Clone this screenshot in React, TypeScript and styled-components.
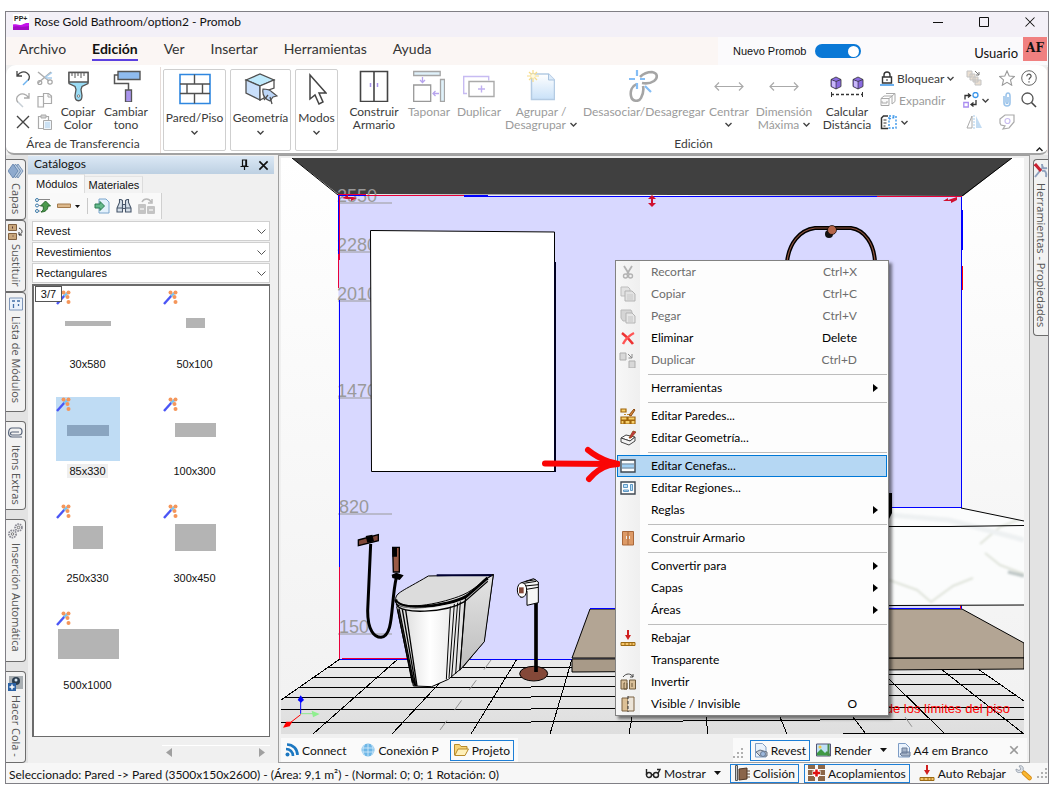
import React from 'react';
import styled, { createGlobalStyle, css } from 'styled-components';

const ui = 'Lato, "Open Sans", sans-serif';
const classic = '"Liberation Sans", Arial, sans-serif';
const ink = '#3b3b3b';
const faded = '#9b9b9b';

const GlobalStyle = createGlobalStyle`
  *, *::before, *::after { box-sizing: border-box; }
  body { margin: 0; background: #fff; font-family: ${ui}; font-size: 12px; color: #111; }
  button, input, select { font: inherit; color: inherit; }
  button { border: 0; padding: 0; margin: 0; background: none; }
  svg { display: block; flex: none; }
`;

/* ---------- window frame ---------- */
const Page = styled.div`
  display: flex;
  min-height: 100vh;
  padding: 11px 5px 6px;
`;
const Window = styled.div`
  flex: 1;
  min-width: 0;
  display: flex;
  flex-direction: column;
  border: 1px solid #807f85;
  background: #f0f0f0;
`;
const TitleBar = styled.header`
  display: flex;
  align-items: center;
  height: 25px;
  padding: 0 12px 6px 7px;
  gap: 5px;
  background: #f3f0f7;
`;
const Title = styled.h1`
  flex: 1;
  margin: 0;
  font-size: 12px;
  font-weight: 400;
  line-height: 16px;
`;
const WindowButtons = styled.div`
  display: flex;
  gap: 34px;
`;

/* ---------- ribbon tabs ---------- */
const TabBar = styled.nav`
  display: flex;
  align-items: stretch;
  height: 28px;
  background: #fbfafc;
`;
const RibbonTabs = styled.div`
  display: flex;
  flex: 0 0 712px;
  gap: 26px;
  padding: 2px 13px 0;
  background: #fbf6f4;
`;
const RibbonTab = styled.button<{ $active?: boolean }>`
  height: 22px;
  font-size: 14px;
  line-height: 20px;
  color: ${(p) => (p.$active ? '#111' : '#333')};
  font-weight: ${(p) => (p.$active ? 700 : 400)};
  border-bottom: 2px solid ${(p) => (p.$active ? '#5b3fe0' : 'transparent')};
`;
const ModeSwitch = styled.label`
  display: flex;
  align-items: center;
  gap: 9px;
  padding-left: 15px;
  margin-right: auto;
  font-family: ${classic};
  font-size: 11px;
`;
const Toggle = styled.input`
  appearance: none;
  width: 46px;
  height: 14px;
  margin: 0;
  border-radius: 7px;
  background: #0a78d6;
  display: flex;
  justify-content: flex-end;
  align-items: center;
  padding-right: 2px;
  &::after { content: ''; width: 11px; height: 11px; border-radius: 50%; background: #fff; }
`;
const User = styled.div`
  padding: 7px 5px 0 0;
  font-size: 13px;
  line-height: 18px;
`;
const Avatar = styled.div`
  width: 24px;
  height: 24px;
  margin-right: 1px;
  background: #f08080;
  font: 700 12px/22px "DejaVu Serif", serif;
  text-align: center;
`;

/* ---------- ribbon ---------- */
const RibbonArea = styled.section`
  display: flex;
  height: 90px;
  border-bottom: 2px solid #a3a3a3;
  border-radius: 10px 10px 8px 8px;
  background: #fff;
  position: relative;
  line-height: 13px;
`;
const Group = styled.div<{ $grow?: boolean; $width?: number }>`
  display: flex;
  flex-direction: column;
  align-items: center;
  ${(p) => (p.$grow ? 'flex: 1;' : `flex: 0 0 ${p.$width}px;`)}
  border-right: 1px solid #e6dcd8;
  margin: 2px 0 0;
`;
const GroupLabel = styled.div`
  color: ${ink};
  line-height: 14px;
`;
const ClipboardTools = styled.div`
  display: grid;
  grid-template-columns: 44px 44px 52px;
  width: 100%;
  padding-left: 6px;
  height: 70px;
`;
const EditTools = styled.div`
  display: grid;
  grid-template-columns: 56px 54px 46px 78px 128px 42px 68px 58px 87px 33px 22px 22px;
  width: 100%;
  padding-left: 6px;
  height: 70px;
`;
const MiniGrid = styled.div<{ $cols?: number }>`
  display: grid;
  grid-template-columns: repeat(${(p) => p.$cols || 1}, 1fr);
  grid-auto-rows: 22px;
  justify-items: ${(p) => (p.$cols ? 'center' : 'start')};
`;
const CommandList = styled(MiniGrid)`
  padding-left: 4px;
`;
const MiniButton = styled.button<{ $off?: boolean }>`
  display: flex;
  align-items: center;
  gap: 3px;
  min-width: 22px;
  justify-content: center;
  color: ${(p) => (p.$off ? faded : ink)};
`;
const BigButton = styled.button<{ $off?: boolean }>`
  display: flex;
  flex-direction: column;
  align-items: center;
  gap: 3px;
  padding-top: 3px;
  line-height: 13px;
  white-space: nowrap;
  color: ${(p) => (p.$off ? faded : ink)};
`;
const Label = styled.span`
  display: flex;
  flex-direction: column;
  align-items: center;
`;
const WithCaret = styled.span`
  display: flex;
  align-items: center;
  gap: 4px;
  min-height: 13px;
`;
const BoxedGroup = styled.div`
  display: flex;
  gap: 4px;
  padding: 4px 2px 0;
`;
const BoxedButton = styled.button<{ $width: number }>`
  display: flex;
  flex-direction: column;
  align-items: center;
  gap: 6px;
  width: ${(p) => p.$width}px;
  height: 82px;
  padding-top: 3px;
  border: 1px solid #cfcfcf;
  border-radius: 2px;
  color: ${ink};
  white-space: nowrap;
`;
const Collapse = styled.button`
  position: absolute;
  right: 5px;
  bottom: 1px;
  color: #222;
`;

/* ---------- work area ---------- */
const Work = styled.main`
  flex: 1;
  min-height: 0;
  display: flex;
`;
const Rail = styled.aside<{ $right?: boolean }>`
  flex: 0 0 ${(p) => (p.$right ? 18 : 22)}px;
  min-width: 0;
  overflow: hidden;
  display: flex;
  flex-direction: column;
  padding-top: 4px;
  padding-left: ${(p) => (p.$right ? 3 : 0)}px;
  padding-right: ${(p) => (p.$right ? 0 : 2)}px;
  background: #e3e3e3;
`;
const RailTab = styled.button<{ $length: number; $gap?: boolean; $right?: boolean }>`
  flex: 0 0 ${(p) => p.$length}px;
  min-width: 0;
  display: flex;
  flex-direction: column;
  align-items: center;
  gap: 4px;
  padding: 3px 0 0;
  margin-bottom: ${(p) => (p.$gap ? 9 : 0)}px;
  overflow: hidden;
  background: #f2f2f2;
  border: 1px solid #6d6d6d;
  ${(p) => (p.$right ? css`border-right: 0; border-radius: 4px 0 0 4px;` : css`border-left: 0; border-radius: 0 4px 4px 0;`)}
  color: #555;
  font-family: "Open Sans", sans-serif;
  font-size: 11px;
  line-height: 14px;
  span { writing-mode: vertical-rl; white-space: nowrap; }
`;

/* ---------- catalogue ---------- */
const Catalog = styled.section`
  flex: 0 0 246px;
  display: flex;
  flex-direction: column;
  margin: 1px 4px 0 0;
  font-family: ${classic};
  font-size: 11px;
`;
const CatalogHead = styled.header`
  display: flex;
  align-items: center;
  gap: 9px;
  height: 18px;
  padding: 0 5px 0 6px;
  background: linear-gradient(#dbe8f5, #bdd0e2);
  font: 12px/16px ${ui};
  h2 { flex: 1; margin: 0; padding-bottom: 2px; font: inherit; }
`;
const CatalogTabs = styled.div`
  display: flex;
  align-items: flex-end;
  height: 19px;
`;
const CatalogTab = styled.button<{ $active?: boolean }>`
  height: ${(p) => (p.$active ? 19 : 17)}px;
  padding: 0 ${(p) => (p.$active ? 6 : 3)}px 0 ${(p) => (p.$active ? 8 : 4)}px;
  background: ${(p) => (p.$active ? '#fafafa' : '#f3f3f3')};
  border-right: 1px solid #dcdcdc;
  border-top: 1px solid #e4e4e4;
`;
const CatalogTools = styled.div`
  display: flex;
  align-items: center;
  gap: 6px;
  width: 134px;
  height: 26px;
  padding-left: 7px;
  background: #f9f9f9;
  border-right: 1px solid #d0d0d0;
`;
const ToolGap = styled.i`
  width: 1px;
  height: 16px;
  background: #c9c9c9;
`;
const CatalogBody = styled.div`
  flex: 1;
  display: flex;
  flex-direction: column;
  gap: 1px;
  padding: 2px 4px 0;
`;
const Picker = styled.div`
  position: relative;
  height: 20px;
  select {
    appearance: none;
    width: 100%;
    height: 20px;
    padding: 0 3px;
    border: 1px solid #d0d0d0;
    border-radius: 0;
    background: #fff;
  }
  svg { position: absolute; right: 4px; top: 8px; }
`;
const Shelf = styled.div`
  flex: 1;
  position: relative;
  display: grid;
  grid-template-columns: 107px 107px;
  grid-auto-rows: 107px;
  align-content: start;
  padding-top: 4px;
  border: solid #6b6b6b;
  border-width: 2px 1px 1px 2px;
  background: #fff;
`;
const Counter = styled.div`
  position: absolute;
  left: 1px;
  top: 0;
  width: 27px;
  height: 16px;
  border: 1px solid #555;
  background: #fff;
  line-height: 14px;
  text-align: center;
`;
const Module = styled.button`
  display: flex;
  flex-direction: column;
  align-items: center;
  gap: 3px;
`;
const Thumb = styled.div<{ $on?: boolean }>`
  width: 64px;
  height: 64px;
  background: ${(p) => (p.$on ? '#bfdcf4' : 'none')};
`;
const ModuleName = styled.span<{ $on?: boolean }>`
  padding: 0 2px;
  line-height: 14px;
  background: ${(p) => (p.$on ? '#efefef' : 'none')};
`;
const ScrollStrip = styled.div`
  display: flex;
  justify-content: space-between;
  align-items: center;
  height: 13px;
  margin: 8px 4px 5px 134px;
  padding: 0 5px 0 4px;
  border-top: 1px solid #fff;
`;

/* ---------- viewport ---------- */
const Viewport = styled.section`
  flex: 1;
  min-width: 0;
  display: flex;
  flex-direction: column;
  border: 1px solid #a0a0a0;
  padding: 2px 5px 0 2px;
`;
const Canvas = styled.div`
  flex: 1;
  min-height: 576px;
  position: relative;
  overflow: hidden;
  > svg { position: absolute; inset: 0; width: 100%; height: 100%; }
`;
const Pointer = styled.div`
  position: absolute;
  left: 259px;
  top: 286px;
`;
const DocBar = styled.div`
  display: flex;
  justify-content: space-between;
  height: 28px;
  padding-top: 4px;
  margin: 0 -3px 0 0;
`;
const DocGroup = styled.div<{ $gap: number }>`
  display: flex;
  align-items: center;
  gap: ${(p) => p.$gap}px;
  padding: 0 4px 0 0;
  background: #fafafa;
`;
const DocButton = styled.button<{ $on?: boolean }>`
  display: flex;
  align-items: center;
  gap: 3px;
  height: 21px;
  padding: 0 3px;
  white-space: nowrap;
  border: 1px solid ${(p) => (p.$on ? '#1e7fd6' : 'transparent')};
`;
const CloseDoc = styled(DocButton)`
  margin-left: 11px;
`;
const DocGrip = styled.span`
  padding: 6px 5px 0 0;
`;
const DropMark = styled.span`
  margin-left: 5px;
`;

/* ---------- context menu ---------- */
const Menu = styled.div`
  position: absolute;
  left: 334px;
  top: 102px;
  width: 274px;
  border: 1px solid #828282;
  background: linear-gradient(90deg, #f7f7f7, #efefef 24px, #fdfdfd 24px);
  box-shadow: 3px 3px 3px rgba(0, 0, 0, 0.5);
`;
const MenuItem = styled.button<{ $off?: boolean; $hot?: boolean }>`
  display: grid;
  grid-template-columns: 20px 1fr 40px 16px;
  column-gap: 13px;
  align-items: center;
  width: 270px;
  height: 22px;
  margin-left: 1px;
  text-align: left;
  color: ${(p) => (p.$off ? '#6d6d6d' : '#000')};
  border: 1px solid ${(p) => (p.$hot ? '#0078d7' : 'transparent')};
  background: ${(p) => (p.$hot ? '#b5d7f3' : 'none')};
  > span { padding-bottom: 2px; }
  > svg { justify-self: center; }
  > svg:last-child { justify-self: start; margin-left: 3px; }
`;
const Shortcut = styled.span`
  display: flex;
  justify-content: flex-end;
`;
const Rule = styled.hr`
  height: 1px;
  margin: 3px 1px 2px 32px;
  border: 0;
  background: #bdbdbd;
`;

/* ---------- status bar ---------- */
const StatusBar = styled.footer`
  display: flex;
  align-items: center;
  height: 20px;
  padding: 0 1px 0 3px;
  background: #f7f7f7;
  gap: 5px;
`;
const StatusText = styled.span`
  flex: 1;
  white-space: nowrap;
  line-height: 16px;
  padding-top: 4px;
`;
const StatusButton = styled(DocButton)`
  height: 19px;
`;

/* ---------- icons ---------- */
type IconProps = { w: number; h?: number; box?: string; children: React.ReactNode };
const Icon = ({ w, h, box, children }: IconProps) => (
  <svg width={w} height={h || w} viewBox={box || `0 0 ${w} ${h || w}`} fill="none" aria-hidden="true">{children}</svg>
);
const Caret = () => <Icon w={7} h={5}><path d="M.5 1l3 3 3-3" stroke="#444" strokeWidth="1.400" /></Icon>;
const Solid = () => <DropMark><Icon w={7} h={4}><path d="M0 0h7L3.500 4z" fill="#111" /></Icon></DropMark>;
const Grip = () => <Icon w={10}><g fill="#b0b0b0"><path d="M8 0h2v2H8zM4 4h2v2H4zM8 4h2v2H8zM0 8h2v2H0zM4 8h2v2H4zM8 8h2v2H8z" /></g></Icon>;

const Logo = () => (
  <svg width="16" height="16" viewBox="0 0 16 16" aria-hidden="true">
    <rect width="16" height="16" fill="#fff" />
    <path d="M0 10.500c3-.5 4 .5 7 .5s4-2.500 9-2V16H0z" fill="#c512ec" />
    <path d="M0 13c4-2 8 1 16-1v4H0z" fill="#a30cc4" />
    <text x="1" y="7" fontSize="7" fontWeight="700" fontFamily="Liberation Sans" fill="#222">PP+</text>
  </svg>
);

const Undo = () => <Icon w={16}><path d="M2 1v5h5M2.500 5.500C5 2 9 1 12 3c3 2 3 5 1 7.500" stroke="#444" strokeWidth="1.300" /><path d="M13 10l-5 5" stroke="#6fb4f0" strokeWidth="1.500" /></Icon>;
const Redo = () => <Icon w={16}><path d="M14 1v5H9M13.500 5.500C11 2 7 1 4 3c-3 2-3 5-1 7.500" stroke="#aaa" strokeWidth="1.300" /><path d="M3 10l5 5" stroke="#c7cfd6" strokeWidth="1.500" /></Icon>;
const Cut = () => <Icon w={16}><path d="M1 2l11 9M1 13L14 2" stroke="#adadad" strokeWidth="1.500" /><path d="M8 7.500l7-5M9 8h6" stroke="#a9cdec" strokeWidth="1.500" /><circle cx="13" cy="12" r="2.200" stroke="#a5a5a5" strokeWidth="1.200" /><circle cx="2.800" cy="12.500" r="2" stroke="#a5a5a5" strokeWidth="1.200" /></Icon>;
const Copy = () => <Icon w={16}><path d="M1 4.500h5.500V15H1zM6.500 1.500h5L14.500 4v7.500h-8z" stroke="#aaa" strokeWidth="1.200" fill="#fdfdfd" /><path d="M11 1.500V5h3.500" stroke="#aaa" /></Icon>;
const Cross = ({ s = 16, c = '#444', t = 1.4 }: { s?: number; c?: string; t?: number }) => <Icon w={s} box="0 0 16 16"><path d="M2 2l12 12M14 2L2 14" stroke={c} strokeWidth={t} /></Icon>;
const Paste = () => <Icon w={16}><path d="M6 14.500H1.500v-12h10V6" stroke="#aaa" strokeWidth="1.200" /><path d="M4 1h5v3H4z" fill="#d5d5d5" stroke="#aaa" /><path d="M6.500 6.500h8v9h-8z" fill="#eef5fb" stroke="#aaa" /><path d="M8 9h5M8 11h5M8 13h5" stroke="#a9cdec" /></Icon>;

const Brush = () => (
  <Icon w={32}><path d="M7 2.500h19v11l-6 3-1 3 1 6c0 7-7 7-7 0l1-6-1-3-6-3z" fill="#9adcf5" stroke="#555" strokeWidth="1.300" /><path d="M7 2.500h19V12H7z" fill="#fff" stroke="#555" strokeWidth="1.400" /><path d="M10 3v3M13 3v5M16 3v3M19 3v5M22 3v3" stroke="#555" /><circle cx="16.500" cy="26" r="1.200" fill="#fff" stroke="#555" strokeWidth=".7" /></Icon>
);
const Roller = () => (
  <Icon w={32}><path d="M8 1.500h22v8H8z" fill="#8fbbee" stroke="#555" strokeWidth="1.400" /><path d="M8 5H4.500v8.500h14V20" stroke="#555" strokeWidth="1.500" /><path d="M15.500 20h6v12h-6z" fill="#a994ec" stroke="#555" strokeWidth="1.300" /></Icon>
);
const Bricks = () => (
  <Icon w={34} h={32}><path d="M2 1.500h30v29H2z" fill="#fff" stroke="#2f87e0" strokeWidth="1.600" /><path d="M2 11h30M2 20.500h30M16.500 1.500V11M9 11v9.500M24.500 11v9.500M16.500 20.500v10" stroke="#505050" strokeWidth="1.400" /></Icon>
);
const Cube = () => (
  <Icon w={34} h={32}><path d="M2 7l14-6 14 6-14 6z" fill="#bfeafc" stroke="#505050" strokeWidth="1.300" /><path d="M2 7v13l14 7V13z" fill="#c9dffa" stroke="#505050" strokeWidth="1.300" /><path d="M16 13v14l4-2 2-7 8-3V7z" fill="#fff" stroke="#505050" strokeWidth="1.300" /><path d="M19 16c4 0 7 1 9 3l5 4-4 1-3 4c-5-2-8-6-7-12z" fill="#bcd6f8" stroke="#505050" strokeWidth="1.200" /><path d="M20 27l4-5M26 24l2 7" stroke="#505050" strokeWidth="1.300" /></Icon>
);
const Arrow = () => <Icon w={20} h={32}><path d="M3 2v24l5-4 4 9 4-2-4-9h7z" fill="#fff" stroke="#444" strokeWidth="1.500" /></Icon>;
const Wardrobe = () => <Icon w={30} h={32}><path d="M1.500 1.500h27v30h-27zM15 1.500v30" stroke="#444" strokeWidth="1.600" /><path d="M11.500 13v4M18.500 13v4" stroke="#a994ec" strokeWidth="1.500" /></Icon>;
const Cover = () => <Icon w={32}><path d="M.7 1.500h26.500v4H.7zM27.500 9.500h4v22h-4z" fill="#dff1fa" stroke="#a5a5a5" strokeWidth="1.300" /><path d="M.7 15h17v16.500H.7z" stroke="#999" strokeWidth="1.300" /><path d="M9.500 7v5M7 10l2.500 2.500L12 10M26 23.500h-6M22.500 21L20 23.500l2.500 2.500" stroke="#b7a4ee" strokeWidth="1.300" /></Icon>;
const Duplicate = () => <Icon w={32}><path d="M4 23.500H.7v-17h25v4" stroke="#c7bbf2" strokeWidth="1.400" /><path d="M6 11.500h25v15H6z" fill="#fff" stroke="#aaa" strokeWidth="1.400" /><path d="M18.500 15.500v7M15 19h7" stroke="#c0b0f0" strokeWidth="1.400" /></Icon>;
const NewPage = () => <Icon w={28} h={32}><defs><linearGradient id="pg" x1="0" y1="0" x2="0" y2="1"><stop stopColor="#fff" /><stop offset="1" stopColor="#c9e1f8" /></linearGradient></defs><path d="M4.500 4h17l6 6v19.500h-23z" fill="url(#pg)" stroke="#b4cbe3" strokeWidth="1.500" /><path d="M21.500 4v6h6" fill="#dcebfa" stroke="#a9c3df" /><path d="M6 0v12M0 6h12M2 2l8 8M10 2l-8 8" stroke="#f8dc88" strokeWidth="1.200" /><circle cx="6" cy="6" r="2" fill="#fffbe0" /></Icon>;
const Unlink = () => <Icon w={32}><g stroke="#a5a5a5" strokeWidth="2.600" fill="none"><path d="M12 7c3-3 7-5 12-5 6 1 6 6 2 9-3 2-7 3-12 2" /><path d="M9 14c-5 2-7 7-6 12 1 6 8 6 10 2 2-4 3-8 2-12" /></g><g stroke="#84bdf5" strokeWidth="2.200"><path d="M9 0v6M1 9h6M12 9h5M9 13v6M17 16l6 6" /></g></Icon>;
const Spread = () => <Icon w={30} h={32}><path d="M1 16.500h28M5 12.500l-4 4 4 4M25 12.500l4 4-4 4" stroke="#aaa" strokeWidth="1.200" /></Icon>;
const Measure = () => (
  <Icon w={34} h={32}>{[1, 23].map((x) => <g key={x} transform={`translate(${x} 7)`}><path d="M0 2.500L5 0l5 2.500v7L5 12 0 9.500z" fill="#8a6be0" stroke="#333" strokeWidth=".8" /><path d="M0 2.500l5 2 5-2M5 4.500V12" stroke="#333" strokeWidth=".8" /><path d="M1 3.500l3.500 1.300V11L1 9.200z" fill="#c9b8fa" /></g>)}<path d="M1.500 22v5M32.500 22v5" stroke="#333" /><path d="M1 24.500h32" stroke="#333" strokeWidth="1.500" strokeDasharray="3 2" /></Icon>
);
const Lock = () => <Icon w={14} h={15}><path d="M4 6V4c0-4 6-4 6 0v2" stroke="#333" strokeWidth="1.400" /><path d="M2.500 6h9v6h-9z" stroke="#333" strokeWidth="1.400" /><path d="M7 8v2" stroke="#333" /><path d="M0 14h14" stroke="#3a96ea" strokeWidth="1.500" /></Icon>;
const Expand = () => <Icon w={16}><path d="M6 1.500h9v8l-3 2.500M4 4h8v8M12 4l3-2.500" stroke="#aaa" /><path d="M1 6.500h8v7H1zM1 6.500l3-2.500M9 6.500L12 4" stroke="#aaa" fill="#fafafa" /><path d="M2 9v2h5V9" stroke="#aaa" /></Icon>;
const Panels = () => <Icon w={18} h={16}><path d="M8 2H3.500L1.500 4v10.500H8" stroke="#333" strokeWidth="1.500" /><path d="M3.500 6h3M3.500 9h3M3.500 12h2" stroke="#333" /><path d="M9 2h7v12H9zM9 5l7-2" stroke="#3a96ea" strokeDasharray="2 1.500" strokeWidth="1.400" /></Icon>;
const Stack = () => <Icon w={16}><g stroke="#c4c4c4" fill="#eadfd2"><path d="M1 1h5v6H1zM4 4h5v6H4zM7 7h5v5H7zM9 10h6v5H9z" /></g><path d="M9 1l4 4M13 2v3h-3" stroke="#777" /></Icon>;
const Swap = () => <Icon w={16}><circle cx="12.500" cy="3" r="2.500" stroke="#3a96ea" strokeWidth="1.300" /><path d="M.8 10.500h4.500V15H.8z" stroke="#a98df0" strokeWidth="1.300" /><path d="M2 7.500V3.500h5M5 1.500l2.500 2L5 5.500M13 8v4.500H8.500M10.500 10.500l-2.500 2 2.500 2" stroke="#333" strokeWidth="1.300" /></Icon>;
const Mirror = () => <Icon w={16}><path d="M6 2v12H1z" stroke="#aaa" /><path d="M8 1v14" stroke="#a9cdec" strokeDasharray="2 1" /><path d="M10 2v12h6z" fill="#c3dcf2" /></Icon>;
const Star = () => <Icon w={16}><path d="M8 1l2.200 5 5.300.4-4 3.500 1.200 5.300L8 12.400l-4.700 2.800 1.200-5.300-4-3.500L5.800 6z" stroke="#999" strokeWidth="1.100" /></Icon>;
const Help = () => <Icon w={16}><circle cx="8" cy="8" r="7.300" stroke="#666" /><path d="M5.800 6.300c0-3 4.500-2.700 4.300 0C10 7.700 8 8 8 9.800M8 11.200v1.300" stroke="#555" strokeWidth="1.200" /></Icon>;
const Clip = () => <Icon w={16}><path d="M5 4v7c0 4 6 4 6 0V4c0-4-4-4-4 0v6c0 2 2 2 2 0V5" stroke="#9cc4ea" strokeWidth="1.600" /></Icon>;
const Search = () => <Icon w={16}><circle cx="6.500" cy="6.500" r="5.500" stroke="#555" strokeWidth="1.300" /><path d="M10.500 10.500L15 15" stroke="#444" strokeWidth="1.600" /></Icon>;
const Shape = () => <Icon w={16}><path d="M1 5l5-4h9v7l-5 6-6 1 2-3-4-1-1-2z" stroke="#aaa" strokeWidth="1.200" /><circle cx="8.500" cy="7" r="2.500" stroke="#c9bdf0" strokeWidth="1.200" /></Icon>;

const Layers = () => <Icon w={16}>{[5, 2.5, 0].map((x) => <path key={x} d={`M${x} 8l5-7 5 7-5 7z`} fill={x ? '#b9cce0' : '#8eaace'} stroke="#5f7fa8" strokeWidth=".8" />)}</Icon>;
const Replace = () => <Icon w={16}><path d="M.5.500h8v6h-8zM.5 9.500h8v6h-8z" fill="#c9a77c" stroke="#806040" /><path d="M4.500 2.500v2M4.500 12h1" stroke="#533" /><path d="M11 4c4 2 4 5 0 7M11 8v3h3" stroke="#333" /></Icon>;
const ModuleList = () => <Icon w={16}><path d="M1.500 2h13v12h-13z" fill="#eaf2fb" stroke="#7f96b8" /><path d="M4 5h3M9 5h3M5.500 8v4M10.500 8v2" stroke="#4470a8" strokeWidth="1.300" /></Icon>;
const ClipSide = () => <Icon w={16}><path d="M11 7H4c-2 0-2 3 0 3h7c4 0 4-7 0-7H4C0 3-1 12 4 12h10" stroke="#566379" strokeWidth="1.200" /></Icon>;
const Gears = () => <Icon w={16}><g stroke="#8b8b95" strokeWidth="1.800"><circle cx="10.500" cy="4.500" r="3.400" strokeDasharray="1.600 .8" /><circle cx="4.500" cy="11" r="3.600" strokeDasharray="1.600 .8" /></g><circle cx="10.500" cy="4.500" r="1.300" stroke="#777" /><circle cx="4.500" cy="11" r="1.300" stroke="#777" /></Icon>;
const Camera = () => <Icon w={16}><path d="M1 1h14v13H1z" fill="#a8aeb2" /><circle cx="8" cy="6" r="4" fill="#2c3e50" /><circle cx="8" cy="5" r="1.500" fill="#dbe9f5" /><path d="M0 8h8v8H0z" fill="#2d63a5" /><path d="M4 9.500v5M1.500 12h5" stroke="#fff" strokeWidth="1.500" /></Icon>;
const Tools = () => <Icon w={14} h={16}><path d="M1 14L9 4M8 1c0 4 2 5 5 4" stroke="#8fa1bd" strokeWidth="2" /><path d="M1 1l6 7" stroke="#c92030" strokeWidth="3" /><path d="M8 8c3-1 5 1 4 6" stroke="#91a3bf" strokeWidth="2" /></Icon>;

const Tree = () => <Icon w={16}><g stroke="#3b79a8"><circle cx="2" cy="2" r="1.500" /><circle cx="2" cy="7.500" r="1.500" /><circle cx="2" cy="13" r="1.500" /></g><path d="M4 1.500h11M4 7.500h1.500M4 13h1.500" stroke="#888" /><path d="M10.500 3l5 5h-2.500c0 4-3 6-7 6 2-1 3-3 2-6H5.500z" fill="#4c9a4c" stroke="#27662b" /></Icon>;
const Plank = () => <Icon w={24} h={8}><path d="M.5 2h13v3.500H.5z" fill="#ddb98c" stroke="#a37a4d" /><path d="M18 3h5L20.500 6z" fill="#111" /></Icon>;
const Import = () => <Icon w={16}><path d="M5 1h7l3 3v11H5z" fill="#e3f1fc" stroke="#7aa5cc" /><path d="M1 6h5V3.500L10.500 8 6 12.500V10H1z" fill="#64b98b" stroke="#2b7a50" /></Icon>;
const Binoculars = () => <Icon w={16}><g stroke="#47566a" strokeWidth="1.100" fill="#d6e0ea"><path d="M5 1.500H3.500v3L1 10v4h5.500V2.500zM11 1.500h1.500v3L15 10v4H9.500V2.500z" /><path d="M6.500 6.500h3v4h-3zM1 10h5.500M9.500 10H15" /></g></Icon>;
const Ghost = () => <Icon w={18} h={16}><rect y="6" width="8" height="10" rx="1" fill="#c4c4c4" /><rect x="9" y="8" width="8" height="8" rx="1" fill="#c4c4c4" /><path d="M2 11h4M11 12h4" stroke="#eee" strokeWidth="1.500" /><path d="M4 4c2-4 7-4 9 0M14 1v4h-4" stroke="#b9b9b9" strokeWidth="1.500" /></Icon>;
const Pin = () => <Icon w={9} h={12}><path d="M2.500 1h4v6h-4zM.5 7.500h8M4.500 7.500V11" stroke="#111" strokeWidth="1.200" /><path d="M6 1v6" stroke="#111" strokeWidth="1.500" /></Icon>;

const Rss = () => <Icon w={14}><circle cx="2.500" cy="11.500" r="2" fill="#1d78c1" /><path d="M1 6c4 0 7 3 7 7M2 1.500C8 1.500 12.500 6 12.500 12" stroke="#1d78c1" strokeWidth="2.600" /></Icon>;
const Globe = () => <Icon w={14}><circle cx="7" cy="7" r="6.500" fill="#6db6e6" /><path d="M1 5h12M1 9h12M7 .5v13M3.500 1.500c-2 4-2 7 0 11M10.500 1.500c2 4 2 7 0 11" stroke="#d9eefb" strokeWidth=".8" /></Icon>;
const Folder = () => <Icon w={15} h={14}><path d="M.5 12V1.500h5l1.500 2h6V6" fill="#f7d47a" stroke="#b98b2b" /><path d="M.8 12.500L4 6h10.500L11 12.500z" fill="#fff0b8" stroke="#b98b2b" /></Icon>;
const Printer = () => <Icon w={14} h={15}><path d="M1.500.500h7l3.500 3.500V14H1.500z" fill="#e9f2fc" stroke="#7f9dc4" /><path d="M2 9l4-2 7 2v4H6z" fill="#c9ced6" stroke="#66707e" /><circle cx="9" cy="11" r="2.500" fill="#9db9dc" stroke="#667a96" /></Icon>;
const Picture = () => <Icon w={15} h={14}><path d="M.5 1h14v12H.5z" fill="#bfe1f7" stroke="#557" /><path d="M1 10l4-4 4 4 2-2 3 3v1.500H1z" fill="#3f9a45" /><circle cx="4" cy="4" r="1.500" fill="#f6c945" /><path d="M12.500 1v12" stroke="#4a8a4a" strokeWidth="2" /></Icon>;
const A4 = () => <Icon w={14} h={15}><path d="M1.500.500h7l4 4V14h-11z" fill="#eaf3fd" stroke="#7d9cc5" /><path d="M5 5h5v5H5zM3 11l3-2h7v4H5z" fill="#a6b4c8" stroke="#6a7c99" /></Icon>;
const Glasses = () => <Icon w={16} h={12}><g stroke="#222" strokeWidth="1.400"><circle cx="4" cy="8" r="2.500" /><circle cx="11" cy="8" r="2.500" /><path d="M1.500 8V2M6.500 7.500l2 .5M13 6.500l2-4h-3" /></g></Icon>;
const Wall = () => <Icon w={16}><path d="M1.500.500h2v15h-2z" fill="#c5c8cb" stroke="#555" /><path d="M5 4l8-1v11l-8 1z" fill="#8a644a" stroke="#4e3423" /><path d="M13 6h3M13 9h3M13 12h3" stroke="#5e4433" /></Icon>;
const Snap = () => <Icon w={17} h={16}><path d="M0 0h7v4H0zM0 5h7v5H0zM0 11h7v5H0zM10 0h7v4h-7zM10 5h7v5h-7zM10 11h7v5h-7z" fill="#8d6748" /><path d="M8.500 4v8M4.500 8h8" stroke="#fff" strokeWidth="5" /><path d="M8.500 4.500v7M5 8h7" stroke="#e01010" strokeWidth="2.500" /></Icon>;
const Lower = () => <Icon w={16}><path d="M8 0v5" stroke="#d02020" strokeWidth="2" /><path d="M5 5h6L8 10z" fill="#d02020" /><path d="M1 12.500h14v3H1z" fill="#f5c468" stroke="#9b6a14" /><path d="M5 12.500v3M9 12.500v3M12 12.500v3" stroke="#9b6a14" /></Icon>;
const Wrench = () => <Icon w={17} h={16}><path d="M1 4c0 4 3 4 5 3l2 2 2-2-2-2c1-3-1-5-4-4l2 3-2 1.500z" fill="#dce1e8" stroke="#8c96a3" strokeWidth=".8" /><path d="M9 8l5.500 5" stroke="#d98a10" strokeWidth="4.500" strokeLinecap="round" /><path d="M9 8l5.500 5" stroke="#f7b733" strokeWidth="3" strokeLinecap="round" /></Icon>;

const Wand = () => <><path d="M1 14L9 5" stroke="#4a55f5" strokeWidth="2.400" /><path d="M8 6L11.500 3" stroke="#79c6f3" strokeWidth="2.400" /><g fill="#f5965a"><circle cx="7.500" cy="2.500" r="2" /><circle cx="12.500" cy="2.500" r="2" /><circle cx="11.500" cy="7" r="2" /><circle cx="12.500" cy="12" r="2" /></g></>;

/* context-menu glyphs */
const mCut = <Icon w={16}><path d="M4 2l5 8M12 2L7 10" stroke="#b3b3b3" strokeWidth="1.800" /><circle cx="5.500" cy="12" r="2" stroke="#b3b3b3" strokeWidth="1.400" /><circle cx="10.500" cy="12" r="2" stroke="#b3b3b3" strokeWidth="1.400" /></Icon>;
const mCopy = <Icon w={16}><path d="M1 1h7l2 2v7H1z" fill="#e2e2e2" stroke="#bdbdbd" /><path d="M5 5h7l3 3v7H5z" fill="#e2e2e2" stroke="#b3b3b3" /><path d="M7 9h6M7 11h6M7 13h6" stroke="#c9c9c9" /></Icon>;
const mPaste = <Icon w={16}><path d="M1 2h10l1 2v9H3l-2-3z" fill="#d5d5d5" stroke="#b9b9b9" /><path d="M6 5h6l3 3v7H6z" fill="#e6e6e6" stroke="#b3b3b3" /><path d="M8 9h5M8 11h5M8 13h5" stroke="#c4c4c4" /></Icon>;
const mDelete = <Icon w={15}><path d="M1 2c4 3 8 7 11 11" stroke="#e33" strokeWidth="2.600" /><path d="M13 2C9 4 4 9 2 13" stroke="#f55" strokeWidth="2.400" /></Icon>;
const mDup = <Icon w={18} h={16}><path d="M1 1h6v7H1zM10 9h6v7h-6z" fill="#d8d8d8" stroke="#adadad" /><path d="M9 2l4 4M13 2v4H9.500" stroke="#888" /></Icon>;
const mWalls = <Icon w={16}><g fill="#f7cf6b" stroke="#a0650a" strokeWidth="1.200"><path d="M1 1h5v3H1zM1 9h6v3H1zM8 9h7v3H8zM1 12.500h3V16H1zM5 12.500h5V16H5zM11 12.500h4V16h-4z" /></g><path d="M4 6.500h6" stroke="#c28a2e" strokeDasharray="2 1" /><path d="M9 7l5-6 1 1-4 6z" fill="#d9893a" stroke="#8a4a10" /></Icon>;
const mGeo = <Icon w={16}><path d="M1 8l5-3 9 2-5 4z" fill="#fcfcfc" stroke="#444" /><path d="M1 8v4l8 3 6-4V7l-5 4z" fill="#f2f2f2" stroke="#444" /><path d="M9 8l4-7 3 1-5 6z" fill="#c2353e" stroke="#8a4a10" strokeWidth=".8" /></Icon>;
const mBorder = <Icon w={16} h={14}><path d="M1 1h14v12H1z" fill="#fdfdfd" stroke="#3f4852" strokeWidth="1.400" /><path d="M2 5.500h12v3H2z" fill="#9fd0f5" /><path d="M2 5h12M2 9h12" stroke="#4b7396" /></Icon>;
const mRegion = <Icon w={16} h={14}><path d="M1 1h14v12H1z" fill="#fdfdfd" stroke="#3f4852" strokeWidth="1.400" /><path d="M3.500 3.500h4v3h-4zM3.500 9h5v1.500h-5zM10.500 3.500h2v6h-2z" fill="#bfe0f7" stroke="#3f83b8" strokeWidth=".8" /></Icon>;
const mWard = <Icon w={12} h={15}><path d="M.5.500h11v13.500H.5z" fill="#dd9a66" stroke="#a9683a" /><path d="M6 .5V14" stroke="#a9683a" /><path d="M4.500 5v3M7.500 5v3" stroke="#eee" /></Icon>;
const mInvert = <Icon w={17} h={18}><path d="M3 4c3-4 8-4 10 0M13 1v3h-3" stroke="#444" /><g fill="#d9bf98" stroke="#6e5a3c"><path d="M1 7h6v9H1zM9.500 7h6v9h-6z" /></g><path d="M5 10H4v6h3v-6M12 10v4" stroke="#6e5a3c" /></Icon>;
const mVisible = <Icon w={14} h={16}><path d="M1 2h6v13H1z" fill="#dcc096" stroke="#7a6040" /><path d="M7 1h6v14H7" fill="#ece4d8" stroke="#7a6040" /><path d="M7 0v16" stroke="#333" strokeDasharray="3 2" /></Icon>;

/* ---------- 3D scene ---------- */
const gridRows: [number, number, number][] = [[300, 677, 674], [300, 687, 684], [300, 697, 695], [281, 709, 707], [281, 722, 719]];
const gridCols: [number, number, number, number][] = [[340, 659, 281, 700], [398, 659, 313, 734], [462, 659, 392, 734], [517, 659, 471, 734], [572, 659, 550, 734], [632, 717, 629, 734], [706, 717, 708, 734], [780, 717, 787, 734], [853, 717, 866, 734], [889, 679, 945, 734], [941, 669, 1024, 734], [978, 669, 1024, 701]];
const levels: [string, number][] = [['2550', 202], ['2280', 251], ['2010', 300], ['1470', 397], ['820', 513], ['150', 633]];

const Scene = () => (
  <svg viewBox="281 158 743 576" preserveAspectRatio="xMinYMin slice" role="img" aria-label="Vista 3D">
    <defs>
      <linearGradient id="back" x1="0" y1="0" x2="0" y2="1"><stop stopColor="#fff" /><stop offset="1" stopColor="#f1f1f1" /></linearGradient>
      <linearGradient id="bowl"><stop stopColor="#d5d5d5" /><stop offset=".35" stopColor="#fff" /><stop offset="1" stopColor="#c4c4c4" /></linearGradient>
      <linearGradient id="tank" x1="0" y1="0" x2="0" y2="1"><stop stopColor="#e4e4e4" /><stop offset="1" stopColor="#bdbdbd" /></linearGradient>
      <linearGradient id="floor" x1="0" y1="0" x2="0" y2="1"><stop stopColor="#eaeaea" /><stop offset="1" stopColor="#dedede" /></linearGradient>
      <filter id="soft"><feGaussianBlur stdDeviation="1" /></filter>
      <clipPath id="slab"><path d="M889 508h72l63 13v84l-135 1z" /></clipPath>
    </defs>
    <path d="M281 158h743v576H281z" fill="url(#back)" />
    <path d="M292 158h720l-49 38-625-2z" fill="#404040" />
    <path d="M292 158l46 37M1012 158l-50 38" stroke="#000" />
    <path d="M338 195l624 2-1 411v51H340z" fill="#d8d8ff" />
    <g fill="#9a9a9a" fontFamily="Liberation Sans" fontSize="18">
      {levels.map(([t, y]) => <React.Fragment key={t}><text x={y > 500 ? 339 : 337} y={y}>{t}</text><path d={`M338 ${y}.500h54v1h-54z`} /></React.Fragment>)}
    </g>
    <path d="M340 659l-59 41v34h743v-33l-46-32H572v-10z" fill="url(#floor)" />
    <g stroke="#000" shapeRendering="crispEdges">
      <path d="M329 667.500h243" />
      {gridRows.map(([x, a, b]) => <path key={a} d={`M${x === 300 ? Math.round(340 - (a - 659) * 1.44) : x} ${a}.500L450 ${a}.500 615 ${Math.round((a + b) / 2)}.500 889 ${b}.500H${Math.min(1024, Math.round(978 + (b - 669) * 1.45))}`} fill="none" />)}
      <path d="M843 733.500h181" />
      {gridCols.map(([a, b, c, d]) => <path key={`${a}-${b}`} d={`M${a} ${b}L${c} ${d}`} />)}
    </g>
    <path d="M491 660L440 730M905 717l10 14" stroke="#909090" strokeDasharray="12 13" />
    <g shapeRendering="crispEdges" strokeWidth="1">
      <path d="M338.500 195v65M340 659.500h233" stroke="#00f" fill="none" />
      <path d="M338 195.500h150M961.500 197v411M339.500 300V659" stroke="#00f" fill="none" />
      <path d="M464 196.500h413M962.500 210v40" stroke="#00f" />
      <path d="M877 196.500h85M366 195.500h98M339.500 196v64M338.500 254v34M339.500 567v92M342 658.500h66M338 194.500h28" stroke="#e8003a" fill="none" />
      <path d="M962.500 266v24" stroke="#f00" strokeWidth="1" />
    </g>
    <g fill="#d01030"><path d="M342 198l6-3v2h5l4 1-6 3v-2h-5zM943 201l5-3v2l9-3v3l-6 3v-2zM648 199l4-4 4 4h-3v4h3l-4 4-4-4h3v-4z" /></g>
    {/* mirror */}
    <path d="M370.500 230.500l184 1.500V471.500H371.500z" fill="#fff" stroke="#000" />
    <path d="M555 262v210" stroke="#000020" strokeWidth="2" />
    {/* towel ring */}
    <g fill="none"><path d="M787 262c2-18 12-32 28-34h36c14 2 23 16 24 34" stroke="#000" strokeWidth="4" /><path d="M787 262c2-18 12-32 28-34h36c14 2 23 16 24 34" stroke="#93553f" strokeWidth="1.200" /></g>
    <circle cx="829" cy="234" r="4" fill="#111" /><circle cx="832" cy="230" r="4.500" fill="#b5654a" stroke="#000" strokeWidth=".7" />
    {/* shower base */}
    <path d="M590 609h372l62 34v15H572z" fill="#b3a594" stroke="#000" />
    <path d="M572 659l452-1v11l-452 3z" fill="#a89a88" stroke="#000" />
    <path d="M590 608.500h372" stroke="#00f" /><path d="M960.500 605v4" stroke="#f00" />
    {/* stone counter */}
    <path d="M889 508h72l63 13v84l-135 1z" fill="#fbfcfc" />
    <g clipPath="url(#slab)" fill="none" filter="url(#soft)"><path d="M889 580l28 10 14 12 22-16 20-8M980 544l20-17 20-8M985 553l15 12 24 9" stroke="#dfe3da" strokeWidth="2" /><path d="M889 515l60 5 75 20" stroke="#eef1f2" strokeWidth="5" /><path d="M1008 572l16 4" stroke="#b9c2c2" strokeWidth="3" /></g>
    <path d="M889 507.500h72" stroke="#00f" /><path d="M961 508l63 13M889 526.500h60l75-1M889 605.500l135-.5" stroke="#000" fill="none" />
    <path d="M888 493h4v20l-4 8z" fill="#000" />
    {/* toilet, shower hose and paper stand */}
    <g transform="translate(275 440) scale(.33333)">
      <path d="M365 500l50 238 55 2 50-22 45-38 62-75 28-201-100 30-180 60z" fill="url(#bowl)" stroke="#000" strokeWidth="3" />
      <path d="M570 478l65-62 20-12-27 201-73 85z" fill="url(#tank)" stroke="#000" strokeWidth="3" />
      <path d="M362 478c0-20 20-24 98-70l195-4-15 8c-30 22-50 44-90 58-60 22-170 45-188 8z" fill="#dcdcdc" stroke="#000" strokeWidth="3" />
      <path d="M485 406h165" stroke="#003" strokeWidth="6" />
      <path d="M362 478c4 40 160 20 210-8 30-20 42-36 66-56" fill="none" stroke="#000" strokeWidth="9" />
      <path d="M364 492c10 34 150 26 206-8l68-60" fill="none" stroke="#000" strokeWidth="4" />
      <path d="M366 488c10 26 150 20 206-10l64-56" fill="none" stroke="#ddd" strokeWidth="2" />
      <path d="M372 505l46 232M382 508l40 230M392 510l34 228M368 508l44 220" stroke="#000" strokeWidth="4" />
      <path d="M526 500l-12 218M538 492l-16 222M548 488l-18 222M556 484l-14 218M572 474l-18 218" stroke="#000" strokeWidth="3" />
      <path d="M287 312l-9 200c0 60 20 80 40 80 40-4 28-100 46-180" strokeWidth="9" fill="none" stroke="#000" />
      <path d="M250 300l60-16v18l-60 15z" fill="#7e4638" stroke="#000" strokeWidth="4" /><path d="M272 288l20-4 5 20-20 4z" fill="#000" />
      <path d="M353 322h20v74h-18z" fill="#9a5a45" stroke="#000" strokeWidth="4" /><path d="M352 322h14v28h-14zM350 404l14-6 22 8-12 14-22-6z" fill="#000" />
      <ellipse cx="776" cy="701" rx="42" ry="22" fill="#844838" stroke="#000" strokeWidth="3" />
      <path d="M783 480v216" stroke="#000" strokeWidth="11" />
      <path d="M740 428l36-12 14 10v62l-34 8v-42l-18 18z" fill="#f6f6f6" stroke="#000" strokeWidth="3" />
      <path d="M746 430l38-6M750 438l40-4M754 448l36-6M752 424l30-5" stroke="#000" strokeWidth="3" />
      <ellipse cx="741" cy="450" rx="14" ry="22" fill="#fff" stroke="#000" strokeWidth="3" /><path d="M732 442h14v18h-14z" fill="#844838" />
      {/* axis marker */}
      <path d="M77 822v-42" stroke="#00f" strokeWidth="3" /><path d="M68 780l9-14 10 14-9 8z" fill="#00f" />
      <path d="M77 821h40" stroke="#8fe88f" strokeWidth="3" /><path d="M110 812l24 10-20 10z" fill="#8fef8f" />
      <path d="M77 824l-44 34" stroke="#f00" strokeWidth="3" /><path d="M24 863l10-18h18l-8 14z" fill="#f00" />
    </g>
    <text x="1010" y="713" textAnchor="end" fill="#f00" fontFamily="Liberation Sans" fontSize="13">de los límites del piso</text>
  </svg>
);

/* ---------- data ---------- */
const modules: { name: string; w: number; h: number; on?: boolean }[] = [
  { name: '30x580', w: 46, h: 5 }, { name: '50x100', w: 19, h: 10 },
  { name: '85x330', w: 42, h: 11, on: true }, { name: '100x300', w: 41, h: 14 },
  { name: '250x330', w: 30, h: 23 }, { name: '300x450', w: 41, h: 27 },
  { name: '500x1000', w: 61, h: 30 },
];
type Entry = { text: string; icon?: React.ReactNode; keys?: string; off?: boolean; hot?: boolean; sub?: boolean };
const menu: (Entry | null)[] = [
  { text: 'Recortar', keys: 'Ctrl+X', off: true, icon: mCut },
  { text: 'Copiar', keys: 'Ctrl+C', off: true, icon: mCopy },
  { text: 'Pegar', keys: 'Ctrl+V', off: true, icon: mPaste },
  { text: 'Eliminar', keys: 'Delete', icon: mDelete },
  { text: 'Duplicar', keys: 'Ctrl+D', off: true, icon: mDup },
  null,
  { text: 'Herramientas', sub: true },
  null,
  { text: 'Editar Paredes...', icon: mWalls },
  { text: 'Editar Geometría...', icon: mGeo },
  null,
  { text: 'Editar Cenefas...', icon: mBorder, hot: true },
  { text: 'Editar Regiones...', icon: mRegion },
  { text: 'Reglas', sub: true },
  null,
  { text: 'Construir Armario', icon: mWard },
  null,
  { text: 'Convertir para', sub: true },
  { text: 'Capas', sub: true },
  { text: 'Áreas', sub: true },
  null,
  { text: 'Rebajar', icon: <Lower /> },
  { text: 'Transparente' },
  { text: 'Invertir', icon: mInvert },
  { text: 'Visible / Invisible', keys: 'O', icon: mVisible },
];

const Big = ({ icon, lines, off, caret }: { icon: React.ReactNode; lines: string[]; off?: boolean; caret?: 'inline' | 'below' }) => (
  <BigButton $off={off}>
    {icon}
    <Label>
      {lines.map((l, i) => (caret === 'inline' && i === lines.length - 1 ? <WithCaret key={l}>{l}<Caret /></WithCaret> : <span key={l}>{l}</span>))}
      {caret === 'below' && <WithCaret><Caret /></WithCaret>}
    </Label>
  </BigButton>
);

export default function App() {
  return (
    <Page>
      <GlobalStyle />
      <Window>
        <TitleBar>
          <Logo />
          <Title>Rose Gold Bathroom/option2 - Promob</Title>
          <WindowButtons>
            <button aria-label="Minimizar"><Icon w={12}><path d="M1 6.500h10" stroke="#111" /></Icon></button>
            <button aria-label="Maximizar"><Icon w={12}><path d="M1.500 1.500h9v9h-9z" stroke="#111" /></Icon></button>
            <button aria-label="Cerrar"><Cross s={12} c="#111" t={1.4} /></button>
          </WindowButtons>
        </TitleBar>

        <TabBar>
          <RibbonTabs>
            {['Archivo', 'Edición', 'Ver', 'Insertar', 'Herramientas', 'Ayuda'].map((t) => <RibbonTab key={t} $active={t === 'Edición'}>{t}</RibbonTab>)}
          </RibbonTabs>
          <ModeSwitch>Nuevo Promob<Toggle type="checkbox" defaultChecked /></ModeSwitch>
          <User>Usuario</User>
          <Avatar>AF</Avatar>
        </TabBar>

        <RibbonArea>
          <Group $width={155}>
            <ClipboardTools>
              <MiniGrid $cols={2}>
                {[Undo, Cut, Redo, Copy, Cross, Paste].map((I, i) => <MiniButton key={i}><I /></MiniButton>)}
              </MiniGrid>
              <Big icon={<Brush />} lines={['Copiar', 'Color']} />
              <Big icon={<Roller />} lines={['Cambiar', 'tono']} />
            </ClipboardTools>
            <GroupLabel>Área de Transferencia</GroupLabel>
          </Group>
          <BoxedGroup>
            <BoxedButton $width={63}><Bricks />Pared/Piso<Caret /></BoxedButton>
            <BoxedButton $width={61}><Cube />Geometría<Caret /></BoxedButton>
            <BoxedButton $width={43}><Arrow />Modos<Caret /></BoxedButton>
          </BoxedGroup>
          <Group $grow>
            <EditTools>
              <Big icon={<Wardrobe />} lines={['Construir', 'Armario']} />
              <Big icon={<Cover />} lines={['Taponar']} off />
              <Big icon={<Duplicate />} lines={['Duplicar']} off />
              <Big icon={<NewPage />} lines={['Agrupar /', 'Desagrupar']} off caret="inline" />
              <Big icon={<Unlink />} lines={['Desasociar/Desagregar']} off />
              <Big icon={<Spread />} lines={['Centrar']} off caret="below" />
              <Big icon={<Spread />} lines={['Dimensión', 'Máxima']} off caret="inline" />
              <Big icon={<Measure />} lines={['Calcular', 'Distáncia']} />
              <CommandList>
                <MiniButton><Lock />Bloquear<Caret /></MiniButton>
                <MiniButton $off><Expand />Expandir</MiniButton>
                <MiniButton><Panels /><Caret /></MiniButton>
              </CommandList>
              <MiniGrid>
                <MiniButton><Stack /></MiniButton>
                <MiniButton><Swap /><Caret /></MiniButton>
                <MiniButton><Mirror /></MiniButton>
              </MiniGrid>
              <MiniGrid>
                <MiniButton><Star /></MiniButton>
                <MiniButton><Clip /></MiniButton>
                <MiniButton><Shape /></MiniButton>
              </MiniGrid>
              <MiniGrid>
                <MiniButton><Help /></MiniButton>
                <MiniButton><Search /></MiniButton>
              </MiniGrid>
            </EditTools>
            <GroupLabel>Edición</GroupLabel>
          </Group>
          <Collapse aria-label="Contraer"><Icon w={7} h={5}><path d="M.5 4l3-3 3 3" stroke="#222" strokeWidth="1.400" /></Icon></Collapse>
        </RibbonArea>

        <Work>
          <Rail>
            <RailTab $length={61}><Layers /><span>Capas</span></RailTab>
            <RailTab $length={72}><Replace /><span>Sustituir</span></RailTab>
            <RailTab $length={120} $gap><ModuleList /><span>Lista de Módulos</span></RailTab>
            <RailTab $length={89} $gap><ClipSide /><span>Itens Extras</span></RailTab>
            <RailTab $length={143} $gap><Gears /><span>Inserción Automática</span></RailTab>
            <RailTab $length={92}><Camera /><span>Hacer Cola -</span></RailTab>
          </Rail>

          <Catalog>
            <CatalogHead><h2>Catálogos</h2><button aria-label="Fijar"><Pin /></button><button aria-label="Cerrar panel"><Cross s={11} c="#111" t={2.4} /></button></CatalogHead>
            <CatalogTabs><CatalogTab $active>Módulos</CatalogTab><CatalogTab>Materiales</CatalogTab></CatalogTabs>
            <CatalogTools>
              <button aria-label="Subir"><Tree /></button>
              <button aria-label="Módulo"><Plank /></button>
              <ToolGap />
              <button aria-label="Importar"><Import /></button>
              <button aria-label="Buscar"><Binoculars /></button>
              <button aria-label="Reemplazar"><Ghost /></button>
            </CatalogTools>
            <CatalogBody>
              {['Revest', 'Revestimientos', 'Rectangulares'].map((v) => (
                <Picker key={v}>
                  <select aria-label={v} defaultValue={v}><option>{v}</option></select>
                  <Icon w={9} h={5}><path d="M.5.500l4 4 4-4" stroke="#555" /></Icon>
                </Picker>
              ))}
              <Shelf>
                {modules.map((m) => (
                  <Module key={m.name}>
                    <Thumb $on={m.on}>
                      <Icon w={64}><Wand /><rect x={Math.round(32 - m.w / 2)} y={Math.round(33 - m.h / 2)} width={m.w} height={m.h} fill={m.on ? '#8aa5c0' : '#b4b4b4'} /></Icon>
                    </Thumb>
                    <ModuleName $on={m.on}>{m.name}</ModuleName>
                  </Module>
                ))}
                <Counter>3/7</Counter>
              </Shelf>
            </CatalogBody>
            <ScrollStrip><Icon w={6} h={9}><path d="M6 0v9L0 4.500z" fill="#a0a0a0" /></Icon><Icon w={6} h={9}><path d="M0 0v9l6-4.500z" fill="#a0a0a0" /></Icon></ScrollStrip>
          </Catalog>

          <Viewport>
            <Canvas>
              <Scene />
              <Menu role="menu">
                {menu.map((m, i) => (m === null ? <Rule key={i} /> : (
                  <MenuItem key={m.text} role="menuitem" $off={m.off} $hot={m.hot}>
                    {m.icon || <i />}
                    <span>{m.text}</span>
                    <Shortcut>{m.keys}</Shortcut>
                    {m.sub ? <Icon w={5} h={8}><path d="M0 0v8l5-4z" fill="#000" /></Icon> : <i />}
                  </MenuItem>
                )))}
              </Menu>
              <Pointer>
                <Icon w={80} h={40}><path d="M5 19.500L74 20" stroke="#fa0505" strokeWidth="6" strokeLinecap="round" /><path d="M48 6c6 5 13 9 22 12l8 2-8 1c-10 3-16 8-21 14" stroke="#fa0505" strokeWidth="6" strokeLinecap="round" strokeLinejoin="round" /></Icon>
              </Pointer>
            </Canvas>
            <DocBar>
              <DocGroup $gap={7}>
                <DocButton><Rss />Connect</DocButton>
                <DocButton><Globe />Conexión P</DocButton>
                <DocButton $on><Folder />Projeto</DocButton>
              </DocGroup>
              <DocGroup $gap={2}>
                <DocGrip><Grip /></DocGrip>
                <DocButton $on><Printer />Revest</DocButton>
                <DocButton><Picture />Render<Solid /></DocButton>
                <DocButton><A4 />A4 em Branco</DocButton>
                <CloseDoc aria-label="Cerrar documento"><Cross s={10} c="#999" t={2.6} /></CloseDoc>
              </DocGroup>
            </DocBar>
          </Viewport>

          <Rail $right><RailTab $length={177} $right><Tools /><span>Herramientas - Propiedades</span></RailTab></Rail>
        </Work>

        <StatusBar>
          <StatusText>Seleccionado: Pared -&gt; Pared (3500x150x2600) - (Área: 9,1 m²) - (Normal: 0; 0; 1 Rotación: 0)</StatusText>
          <StatusButton><Glasses />Mostrar<Solid /></StatusButton>
          <StatusButton $on><Wall />Colisión</StatusButton>
          <StatusButton $on><Snap />Acoplamientos</StatusButton>
          <StatusButton><Lower />Auto Rebajar</StatusButton>
          <Wrench />
          <Grip />
        </StatusBar>
      </Window>
    </Page>
  );
}
